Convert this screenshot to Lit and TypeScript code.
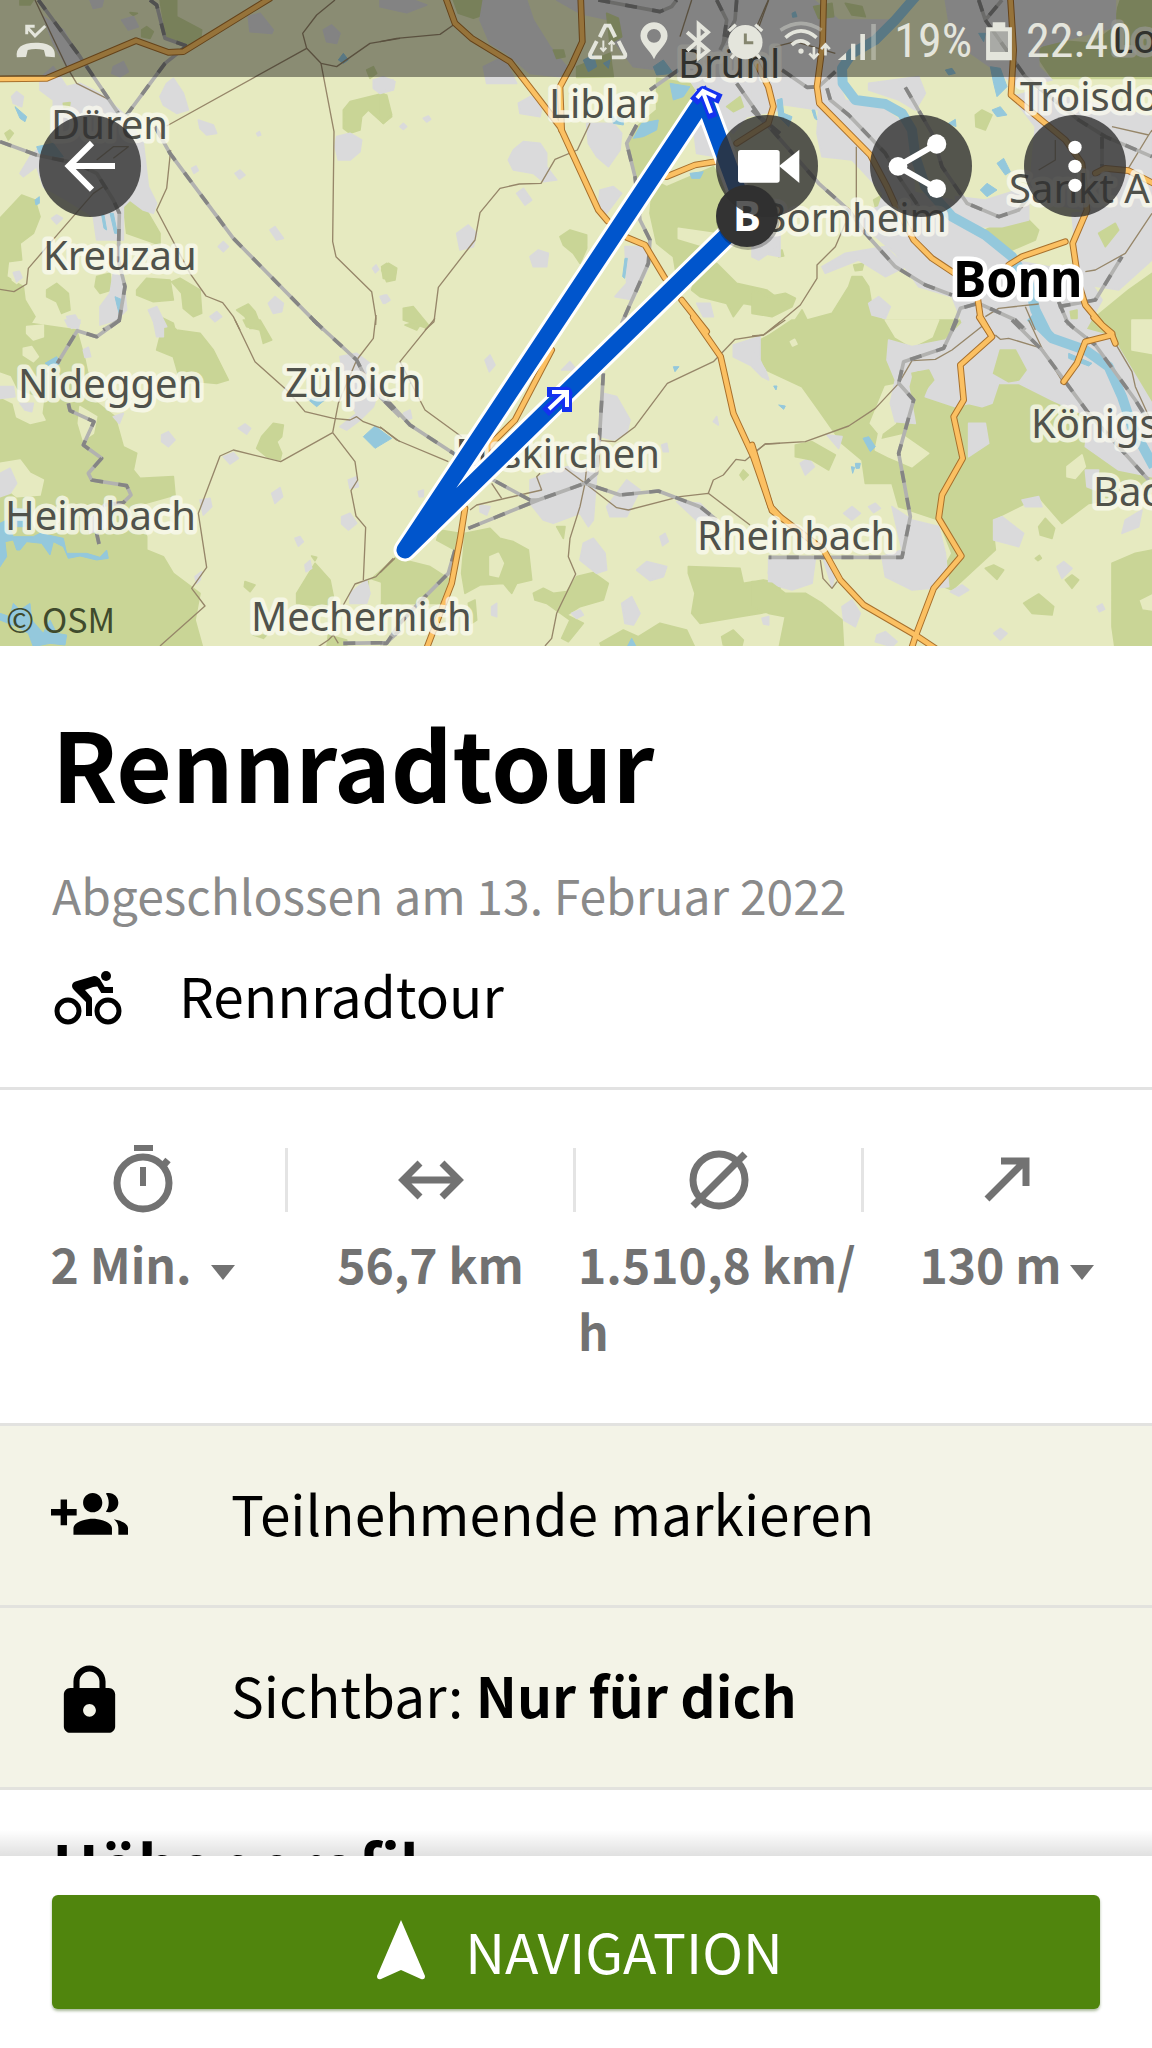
import { LitElement, html, svg, css } from "lit";
import { customElement } from "lit/decorators.js";

interface Tile {
  x: number;
  y: number;
  forest: string[];
  clearing: string[];
  town: string[];
  grove: string[];
  water: string[];
  river: string[];
  minor: string[];
  rail: string[];
  road: string[];
}

/* Vector tiles: x / y is the tile origin on the map, geometry is in thirds of a map unit. */
const TILES: Tile[] = [
  {
    x: 0, y: 0,
    forest: [
      "0,655 65,585 105,600 120,650 100,700 60,730 65,780 25,785 20,830 70,860 75,900 105,950 80,990 0,990",
      "370,610 410,595 445,640 480,700 480,735 380,700",
      "290,830 330,820 335,870 300,880 285,860",
      "140,870 170,850 205,880 210,930 185,940 170,905 140,890",
      "410,870 440,835 510,840 520,900 460,905 410,885",
      "515,845 540,835 600,870 605,940 580,950 550,925 545,880",
      "710,930 745,912 765,935 785,985 750,985 735,950",
      "1030,330 1050,305 1150,280 1175,350 1150,370 1105,330 1085,350 1080,390 1050,400 1030,385",
      "1145,810 1165,790 1190,805 1185,840 1160,845",
      "480,0 530,0 530,50 605,90 600,130 560,135 500,115 490,60",
      "425,90 440,80 460,95 450,115 425,110",
      "1100,210 1120,200 1130,220 1110,235",
      "15,400 30,390 40,400 25,420",
      "480,950 520,970 525,990 490,990",
      "60,0 100,0 90,15 60,15",
      "390,38 412,40 400,46",
    ],
    clearing: ["35,815 60,810 70,835 50,850 37,840"],
    town: [
      "120,235 160,200 200,260 240,250 300,280 370,340 430,430 445,560 470,610 460,640 430,630 390,600 370,620 370,720 290,720 280,650 200,600 130,560 110,500 70,530 60,520 90,470 110,450 160,430 160,300 120,270",
      "130,50 190,90 240,180 200,200 160,130",
      "35,290 50,275 70,290 65,320 40,310",
      "480,290 500,250 520,235 550,280 565,330 530,340 490,315",
      "595,360 640,375 650,400 620,405 600,385",
      "705,520 720,510 735,525 718,537",
      "1010,410 1050,400 1085,420 1080,455 1050,480 1015,480 1005,440",
      "1120,240 1150,230 1185,245 1180,270 1140,280 1120,265",
      "745,50 780,40 820,90 815,100 750,95",
      "970,90 995,75 1020,100 1010,130 980,125",
      "365,60 400,50 415,80 385,90",
      "340,200 370,185 385,215 360,230 335,220",
      "270,0 310,0 305,20 280,25",
      "810,690 825,680 850,715 830,720",
      "655,740 670,725 685,740 670,755",
      "805,910 825,890 850,910 845,935 820,940",
      "445,930 470,920 500,980 470,985",
      "300,920 330,880 340,820 365,830 375,880 380,930 350,960 300,975",
      "630,950 650,935 665,950 645,965",
      "40,818 58,814 66,833 50,845",
      "155,655 170,645 187,655 170,672",
      "575,505 588,498 595,512 582,520",
      "770,400 778,395 782,405 774,408",
      "1118,805 1128,795 1136,808 1126,818",
      "1145,895 1160,885 1170,900 1155,910",
      "200,950 225,945 240,970 215,985",
    ],
    grove: ["190,310 210,308 208,320 192,322"],
    water: [
      "45,320 80,350 75,365 60,355",
      "110,440 160,430 190,470 160,475 120,465",
      "105,600 118,590 118,610 108,615",
      "1015,180 1030,160 1045,180 1030,190",
      "345,890 368,900 360,950 352,920",
      "305,645 312,645 320,690 312,685",
      "330,640 340,640 352,700 344,700",
    ],
    river: [],
    minor: [
      "105,0 200,200 230,250 320,295",
      "1005,0 950,45 908,100 920,145 500,378",
      "920,145 963,190 1010,200 1110,130 1200,115",
      "963,190 1002,395 998,725 1008,770 1115,875 1128,955 1127,975",
      "512,450 500,565 470,630 570,820 618,888 668,908 700,950 720,990",
      "310,560 280,580 180,695 85,805 80,852 42,875 0,868",
      "290,480 340,440 385,440 340,475",
    ],
    rail: [
      "115,0 240,170 355,340",
      "450,0 470,15 495,115 560,138",
      "560,138 495,190 380,345",
      "0,425 110,465 230,490 290,520 340,600 358,640 355,780 375,860 358,960 310,990",
      "465,380 510,460 700,715 970,990",
    ],
    road: ["-10,237 140,235 408,122 505,157 550,155 810,-5"],
  },
  {
    x: 380, y: 0,
    forest: [
      "220,0 310,0 325,40 280,55 235,40",
      "370,30 395,25 398,45 375,52",
      "0,280 20,285 35,345 10,370 0,360",
      "540,710 570,690 620,705 620,745 600,790 580,760 550,735",
      "5,800 20,790 48,815 40,840 10,835",
      "70,925 100,920 145,975 140,985 70,960",
      "830,235 930,250 960,290 800,540 765,530 760,480 740,440 770,380 830,330",
      "820,540 860,560 1000,500 1060,600 1050,700 1020,720 890,830 880,770 830,730 810,640",
      "940,850 1010,790 1070,850 1160,870 1200,900 1200,930 1090,910 1060,950 1040,910 960,890 935,870",
    ],
    clearing: ["895,685 1000,700 1010,725 960,735 895,715"],
    town: [
      "400,450 430,425 480,430 500,460 500,500 530,540 490,545 460,520 400,510 385,480",
      "410,580 430,565 455,600 435,615",
      "620,370 700,370 725,400 720,450 685,500 650,470 625,430",
      "660,570 700,560 725,580 680,640 655,620",
      "230,700 265,675 290,700 280,740 240,750",
      "450,770 475,750 505,760 500,800 460,800",
      "0,0 100,0 140,15 80,38 0,20",
      "310,0 440,0 460,60 510,140 560,200 540,230 450,220 380,160 330,130 300,60",
      "530,0 1200,0 1200,330 1100,350 1060,400 1000,350 930,240 880,215 760,200 700,120 690,60 600,40",
      "735,740 800,740 810,790 760,900 705,890 740,850",
      "950,910 990,910 1000,950 970,950",
      "1120,720 1200,700 1200,770 1150,760",
      "940,380 970,350 1010,470 950,460",
      "415,310 450,290 490,300 480,350 420,340",
      "0,235 40,240 40,265 0,275",
      "310,200 370,170 410,250 320,250",
      "60,380 70,370 80,380 70,388",
      "130,355 145,348 152,358 140,366",
      "0,890 15,885 25,900 10,910",
    ],
    grove: [
      "520,150 550,150 555,170 530,175",
      "590,200 690,160 700,230 590,232",
      "680,40 715,55 725,110 690,130",
      "1040,320 1080,290 1090,320 1060,335",
    ],
    water: [
      "870,250 930,260 910,290 880,300",
      "820,200 850,180 880,220 830,225",
      "785,370 835,360 830,390 790,410 760,415",
      "930,520 970,515 960,535 935,535",
      "610,180 640,165 650,200 625,215",
      "670,190 690,180 685,205",
      "735,775 742,775 734,835 728,830",
      "695,350 730,350 730,375 700,370",
    ],
    river: [],
    minor: [
      "0,125 50,115 180,103 220,75",
      "630,370 592,450 525,478 483,550 418,552 360,565 300,638 285,720 175,862 162,965 135,990",
      "935,0 900,110",
      "1165,0 1130,80",
    ],
    rail: [
      "655,0 840,35 875,20 890,0",
      "1010,0 1040,60 1030,130",
      "1070,0 1065,60 1020,150",
      "895,210 810,270",
      "770,375 740,430 765,530 780,660 810,720 805,790 725,970",
      "1070,250 1140,350 1200,400",
    ],
    road: [
      "196,-10 225,70 275,115 390,185 475,295 540,380 655,630 683,663",
      "602,-10 607,125 575,195 540,260 545,390",
      "1130,190 1165,260 1180,320 1165,370 1070,430",
      "860,530 945,495 1005,485",
      "740,712 795,735 855,835",
      "905,900 980,995",
    ],
  },
  {
    x: 752, y: 0,
    forest: [
      "1100,0 1200,0 1200,235 900,235 850,160 900,120 1020,130 1090,80",
      "670,345 690,330 720,345 700,390 672,380",
      "365,600 400,580 410,620 370,620",
      "0,870 50,890 100,880 130,895 120,920 60,950 0,940",
      "130,960 150,930 165,960 240,940 290,860 300,830 330,830 350,860 360,920 400,970 410,990 100,990",
      "305,795 335,790 330,810 310,812",
      "75,755 90,750 95,768 80,770",
      "700,690 760,660 820,650 860,690 850,720 780,750 740,720",
      "1200,820 1130,870 1020,960 1080,990 1200,990",
    ],
    clearing: ["1080,0 1100,0 1090,30"],
    town: [
      "0,0 185,0 260,60 420,60 360,110 280,170 255,240 280,300 400,330 470,380 490,600 450,640 300,480 210,470 195,400 200,330 0,300",
      "350,250 500,230 520,280 490,330 440,300 350,270",
      "400,560 600,600 780,780 1000,820 1050,900 1000,990 640,990 600,890 500,860 430,760 300,650 380,620",
      "610,590 700,600 830,560 830,660 750,680 680,680 620,640",
      "580,0 1090,0 1090,80 980,110 860,140 860,200 900,240 800,260 600,120",
      "780,290 850,270 1200,350 1200,600 1100,650 1000,630 830,600 850,380",
      "960,640 1200,620 1200,780 1100,870 980,850",
      "210,800 280,760 400,740 460,800 400,830 320,780 220,820",
      "350,910 380,890 415,920 400,955 360,945",
      "0,720 70,700 80,740 20,780 0,770",
    ],
    grove: [
      "185,20 240,10 245,50 200,55",
      "280,10 330,20 340,50 300,45",
      "955,935 975,930 975,955 958,955",
      "1040,700 1090,670 1100,690 1060,740",
    ],
    water: [
      "715,200 745,205 765,260 735,290 725,250",
      "720,330 745,320 765,345 735,350",
      "735,490 755,475 775,515 760,525",
      "685,570 705,550 735,570 705,590",
      "590,370 610,358 612,380",
      "580,210 600,205 610,220 590,225",
      "680,100 700,100 695,125",
      "120,40 130,35 135,50 122,52",
      "75,300 90,295 95,340 120,350 110,380 80,350",
      "180,330 188,330 195,360 188,355",
    ],
    river: ["495,-15 430,60 370,120 300,160 270,205 272,250 310,300 400,312 450,340 480,390 490,470 520,560 600,650 700,705 780,770 830,850 850,930 885,1000"],
    minor: [
      "50,0 10,110",
      "313,440 313,620",
      "280,670 250,740 195,795 195,835 145,915 55,990",
      "1080,380 1190,405 1120,520",
      "910,420 910,480 860,510",
      "1200,640 1120,760 1030,810 1000,815",
      "700,950 740,925 860,912",
      "70,140 130,125 250,160",
      "820,920 850,990",
      "1200,390 1190,405",
    ],
    rail: [
      "680,0 700,60 750,0",
      "700,60 820,230 980,360 1060,410 1200,470",
      "90,210 165,262 200,260 250,215",
      "225,265 235,300 290,345 400,460 440,530 500,620",
      "460,262 540,400 570,500 645,610 740,650 800,630 830,590",
      "0,330 60,390 200,550 290,630 340,700 430,800 520,855 600,885",
      "600,990 625,925 680,910 790,960 820,990",
      "920,905 950,975",
      "920,920 1030,900 1110,770",
      "1050,410 1050,500",
    ],
    road: [
      "215,-10 212,130 195,260 202,310 355,465 405,560 430,615 485,720 540,775 630,835",
      "775,-10 785,150 777,285 940,420 990,490 1005,630 962,730 980,850 1000,915 1050,975 1080,1000",
      "1030,520 1060,505 1130,512 1210,553",
      "770,795 810,770 940,725",
      "675,880 685,950 714,1000",
    ],
  },
  {
    x: 0, y: 320,
    forest: [
      "90,10 230,30 255,120 280,240 345,290 370,380 410,400 400,450 420,475 520,470 525,525 400,560 440,650 440,690 490,710 520,760 600,820 585,900 610,990 0,990 0,-10 80,-10",
      "490,0 530,30 600,40 640,90 685,180 650,190 540,180 520,110 470,90 480,50",
      "730,0 780,0 815,60 790,70 780,30 740,20",
      "785,350 820,310 850,315 845,350 830,365 845,400 840,420 800,410 770,385",
      "735,785 765,795 750,815 733,800",
      "890,820 945,730 990,780 1000,830 980,860 890,850",
      "1100,790 1200,700 1200,850 1140,850",
      "980,990 985,945 1040,960 1040,990",
      "760,945 800,945 790,955",
      "935,708 950,712 945,722",
    ],
    clearing: [
      "80,20 130,15 130,50 100,60 80,40",
      "70,85 95,80 115,110 100,125 70,105",
      "0,160 30,170 50,210 130,240 125,280 135,300 90,310 50,290 40,250 0,230",
      "240,260 290,290 280,340 250,360 235,310",
      "0,430 60,420 90,460 130,480 120,525 50,530 0,490",
      "1110,780 1140,790 1140,850 1110,850",
    ],
    town: [
      "0,200 40,200 45,230 0,235",
      "60,250 100,250 95,275 75,270",
      "340,290 370,280 358,310",
      "485,345 505,335 525,360 505,380 485,365",
      "715,325 735,312 752,325 740,342",
      "250,90 265,82 272,110 255,112",
      "670,410 700,398 715,415 690,432",
      "815,520 840,503 848,530 825,550",
      "1025,590 1050,580 1070,610 1045,630 1025,612",
      "600,540 630,535 635,560 610,585",
      "0,460 30,445 50,490 30,520 0,530",
      "1050,820 1100,780 1110,820 1100,850 1050,850",
      "1020,110 1070,100 1110,130 1090,180 1140,200 1120,260 1080,300 1040,330 1020,320 1070,280 1040,240",
      "885,655 900,650 910,665 895,678",
      "915,735 930,722 935,745 918,755",
      "1045,480 1070,470 1075,500 1050,505",
      "460,0 490,10 490,50 470,50",
      "195,0 240,0 235,25 205,20",
      "265,600 315,550 320,620 270,640",
      "585,770 605,755 600,780 590,790",
    ],
    grove: [],
    water: [
      "135,130 170,110 180,130 160,145",
      "1090,350 1125,318 1175,355 1125,385",
      "920,235 980,235 950,260",
      "0,610 20,600 40,650 100,650 120,640 190,655 200,700 260,700 300,712 320,690 325,715 290,720 240,708 205,715 190,680 160,665 150,705 125,670 80,665 60,690 50,690 40,660 15,665 20,710 0,740",
      "40,850 60,870 90,850 95,900 130,940 150,900 170,940 200,945 195,975 150,970 100,980 85,940 50,920 0,900 0,880 30,890",
      "40,565 90,570 80,620 50,620",
    ],
    river: [],
    minor: [
      "705,0 765,125 860,210 915,275 1000,295 1050,300 1070,290 1090,305 1145,325 1200,365",
      "1128,-15 1120,55 1070,120 1015,250 998,338",
      "998,338 842,425 700,390 660,408 595,580 620,742 575,805 615,858 480,978",
      "998,338 1065,425 1073,480 1053,512 1068,588 1097,622 1090,780",
      "1180,715 1128,770 1065,792 1030,855",
      "955,980 985,960 1000,945 1015,970",
    ],
    rail: [
      "360,0 290,50 232,32 172,130",
      "205,250 210,272 282,305 250,375 305,415 265,460 275,480 380,497 393,525 370,548 315,555",
      "290,640 297,672",
      "940,0 1070,120 1110,200 1200,290",
      "1030,970 1160,968 1200,930",
    ],
    road: [],
  },
  {
    x: 380, y: 320,
    forest: [
      "255,640 330,625 360,655 400,665 445,690 455,780 410,790 395,820 370,790 300,795 255,820 245,760",
      "0,760 40,720 90,725 150,740 205,775 190,850 10,850",
      "180,630 240,640 225,690 170,660",
      "530,620 555,620 550,655",
      "460,820 490,805 520,820 560,815 590,770 640,758 685,790 670,840 600,860 560,885 610,910 565,965 545,955 570,900 500,850 465,840",
      "660,970 730,930 775,950 840,910 920,930 948,990 670,990",
      "925,740 1080,745 1090,790 1150,780 1200,790 1200,870 1140,880 1080,890 960,910 935,880 945,820 925,760",
      "1025,950 1060,930 1090,960 1085,980 1030,975",
      "1140,60 1200,30 1200,160 1150,130",
      "75,15 130,0 110,30",
      "1080,465 1090,450 1105,465 1090,480",
      "265,850 285,840 290,900 275,910",
    ],
    clearing: ["330,710 355,700 370,730 355,770 330,765"],
    town: [
      "450,480 560,440 650,460 640,600 625,620 600,580 520,610 490,600 450,550",
      "660,280 670,220 710,230 750,300 740,340 700,360 665,350",
      "610,670 640,655 675,700 680,750 650,760 600,720",
      "770,750 800,725 860,740 850,770 810,782",
      "725,850 755,830 780,880 760,915 735,910",
      "1060,75 1140,50 1140,120 1165,175 1120,140 1060,110",
      "680,560 740,480 780,510 740,590 690,590",
      "315,120 330,105 345,135 328,155",
      "840,650 855,640 865,665 848,677",
      "890,545 960,550 1010,600 960,610",
      "1170,715 1200,715 1200,790 1165,760",
      "545,150 570,125 590,150",
      "300,555 330,560 320,585 300,575",
      "575,880 600,870 610,885 590,895",
      "335,860 350,850 350,890 335,885",
      "845,375 860,370 865,395 850,395",
      "1000,305 1010,290 1015,315",
      "115,515 130,510 130,530 118,530",
      "70,280 90,270 95,295 80,300",
    ],
    grove: [],
    water: ["880,140 897,140 885,155", "755,955 767,977 743,978"],
    river: [],
    minor: [
      "165,-5 60,125 135,270 245,350",
      "0,320 50,360 205,425",
      "1200,5 1150,45 1065,58 1000,125 862,190 765,320 705,365 660,362",
      "335,490 365,535",
      "270,570 290,555 485,510 470,470 480,460",
      "555,445 615,490 620,440",
      "615,490 600,560 570,655 565,710 587,762 530,880 515,955 495,978",
      "615,490 710,563 745,570 900,530 985,520 1110,615",
      "985,520 1000,480 1030,465 1068,418 1095,422 1155,372 1200,370",
      "0,758 45,715",
    ],
    rail: [
      "20,240 90,315 220,400 340,480 450,540 475,540",
      "265,625 475,540 615,490 720,525 835,513 960,560 1010,600",
      "670,160 658,360 650,460 615,490",
      "225,690 205,760 130,835 60,910 20,970 0,970",
    ],
    road: [
      "515,90 405,300 340,365 310,405",
      "255,565 240,660 215,790 136,995",
      "940,-8 1022,110 1060,280 1120,410 1172,560 1200,590",
    ],
  },
  {
    x: 752, y: 320,
    forest: [
      "30,60 120,0 1200,0 1200,520 1010,550 930,610 860,530 720,600 730,690 600,810 550,790 600,700 560,600 440,560 420,490 340,490 330,420 270,370 200,270 150,200 20,140",
    ],
    clearing: [
      "400,0 560,0 540,50 480,80 430,50",
      "355,310 400,200 450,190 440,260 430,310 390,340 385,360 450,345 530,400 480,440 410,410 370,390 380,340",
      "945,440 990,405 1000,440 970,475 945,470",
      "1140,0 1200,0 1200,100 1140,90",
      "115,65 128,58 135,72 122,78",
    ],
    town: [
      "410,60 480,80 580,60 640,0 720,0 900,0 1080,50 1200,250 1200,470 1100,450 1000,380 1010,290 900,240 800,190 740,190 720,250 690,260 650,250 610,260 520,230 545,170 500,150 480,160 470,200 490,310 430,305 415,250 430,180 405,120",
      "650,310 700,310 710,370 650,410",
      "420,560 480,600 560,620 580,700 590,800 480,810 400,770 390,710 450,690",
      "725,600 750,590 815,640 800,680 725,660",
      "810,540 860,530 870,560 820,560",
      "50,715 190,715 180,790 120,810 50,790",
      "275,580 300,560 325,580 300,600",
      "350,560 370,550 385,565 365,578",
      "915,740 935,725 960,745 930,775",
      "595,815 630,795 650,810 620,828",
      "270,860 300,840 325,880 310,920 275,900",
      "375,945 400,935 435,965 420,980 370,965",
      "725,940 745,925 765,940 745,960",
      "145,430 170,415 187,440 160,465",
      "225,345 270,350 260,385",
      "1110,640 1120,600 1170,570 1160,620",
      "30,895 50,890 50,915 35,912",
      "1035,860 1050,852 1058,868 1042,875",
      "0,90 40,150 50,180 30,170 0,140",
      "215,720 250,760 240,800",
      "1000,450 1040,450 1030,510 1005,500",
    ],
    grove: [
      "725,160 745,90 790,90 822,150 800,180 770,185",
      "860,620 880,595 908,625 900,655 865,645",
      "815,850 860,822 905,860 900,885 840,880",
      "700,745 725,735 755,750 735,778",
      "940,780 960,765 980,780 960,805",
      "850,715 862,706 868,715 858,722",
      "1080,730 1150,700 1200,690 1200,820 1160,840 1170,870 1200,875 1200,990 1090,990 1080,920",
      "0,785 60,790 100,820 160,820 210,850 270,900 275,990 80,990 100,890 50,880 0,860",
      "130,375 180,365 250,405 230,450 180,420 130,410",
      "480,160 530,150 545,180 520,210 495,230",
    ],
    water: [
      "333,355 350,350 370,380 355,395",
      "80,255 100,258 95,268",
      "65,198 75,198 72,210",
      "310,430 325,430 322,445 312,445",
      "298,440 308,442 302,460",
      "950,100 1020,130 1010,138 950,115",
    ],
    river: ["835,-10 900,55 1000,90 1070,140 1110,230 1140,320 1205,440"],
    minor: [
      "100,0 35,45 0,48",
      "695,15 600,90 550,118 480,122 440,190 370,265 290,318 160,365 40,372 10,395",
      "730,45 745,58 770,55 870,85",
      "830,0 870,85 935,190",
      "205,720 213,775 240,805 255,785",
      "1090,70 1140,155 1150,200 1200,310",
    ],
    rail: [
      "615,0 575,85 455,125 440,190 485,240 440,400 475,590 450,712 50,712",
      "780,0 870,90 1010,280 1190,480",
      "940,0 960,20 1030,75 1150,240 1200,320",
    ],
    road: [
      "682,-8 720,50 625,135 635,240 605,290 632,415 570,525 560,595 628,708 545,805 490,950 474,1000",
      "0,375 60,572 215,690 265,780 335,855 490,945 565,995",
      "1025,-8 1080,45 1000,65 975,130 935,185",
      "1080,45 1090,70",
    ],
  },
];

const LABELS: { x: number; y: number; name: string; end?: boolean }[] = [
  { x: 51, y: 139, name: "Düren" },
  { x: 43, y: 270, name: "Kreuzau" },
  { x: 549, y: 118, name: "Liblar" },
  { x: 678, y: 78, name: "Brühl" },
  { x: 947, y: 232, name: "Bornheim", end: true },
  { x: 1020, y: 111, name: "Troisdo" },
  { x: 1009, y: 203, name: "Sankt A" },
  { x: 1112, y: 53, name: "Lo" },
  { x: 285, y: 397, name: "Zülpich" },
  { x: 18, y: 398, name: "Nideggen" },
  { x: 5, y: 530, name: "Heimbach" },
  { x: 251, y: 631, name: "Mechernich" },
  { x: 660, y: 468, name: "Euskirchen", end: true },
  { x: 697, y: 550, name: "Rheinbach" },
  { x: 1031, y: 438, name: "Königs" },
  { x: 1093, y: 506, name: "Bad" },
];

type AreaKind = "forest" | "clearing" | "town" | "grove" | "water";
type LineKind = "river" | "minor" | "rail" | "road";

const place = (t: Tile) => `translate(${t.x} ${t.y}) scale(0.33333)`;

const areas = (kind: AreaKind) =>
  TILES.map(
    (t) => svg`<g class=${"area " + kind} transform=${place(t)}>
      ${t[kind].map((p) => svg`<polygon points=${p}></polygon>`)}
    </g>`,
  );

const lines = (kind: LineKind, cls: string) =>
  TILES.map(
    (t) => svg`<g class=${"line " + cls} transform=${place(t)}>
      ${t[kind].map((p) => svg`<polyline points=${p}></polyline>`)}
    </g>`,
  );

@customElement("tour-map")
export class TourMap extends LitElement {
  static styles = css`
    :host { display: block; }
    .map { display: block; width: 100%; height: auto; background: #e6eac0; }
    .area { stroke-width: 5; stroke-linejoin: round; }
    .forest, .grove { fill: #c9d596; stroke: #c9d596; }
    .clearing { fill: #e6eac0; stroke: #e6eac0; }
    .town { fill: #dadadb; stroke: #dadadb; }
    .water { fill: #94c8dc; stroke: #94c8dc; stroke-width: 3; }
    .line { fill: none; stroke-linejoin: round; }
    .river { stroke: #94c8dc; stroke-width: 30; }
    .minor { stroke: #968669; stroke-width: 4; }
    .rail { stroke: #b2b2b0; stroke-width: 11; }
    .sleepers { stroke: #858584; stroke-width: 11; stroke-dasharray: 36 46; }
    .casing { stroke: #a8702c; stroke-width: 20; stroke-linecap: round; }
    .road { stroke: #fbc062; stroke-width: 14; stroke-linecap: round; }
    .label {
      font: 40px "Noto Sans", sans-serif;
      fill: #50524b;
      stroke: rgba(250, 250, 240, 0.75);
      stroke-width: 9px;
      stroke-linejoin: round;
      paint-order: stroke;
    }
    .end { text-anchor: end; }
    .city { font-size: 50px; font-weight: 700; fill: #000; stroke: #fff; }
    .route { fill: none; stroke-linejoin: round; stroke-linecap: round; }
    .halo { stroke: #fff; stroke-width: 23; }
    .track { stroke: #0055cc; stroke-width: 17; }
    .heading { fill: none; stroke: #fff; stroke-width: 4; }
    .glow { stroke: #1432f0; stroke-width: 10; stroke-linejoin: round; stroke-linecap: square; }
    .pin { fill: #333; }
    .shade { fill: rgba(0, 0, 0, 0.25); }
    .letter { font: 700 42px "Noto Sans", sans-serif; fill: #fff; text-anchor: middle; }
    .credit { font: 34px "Noto Sans CJK SC", sans-serif; fill: #3f4a2c; }
  `;

  render() {
    return html`<svg class="map" viewBox="0 0 1152 646" role="img" aria-label="Karte">
      ${areas("forest")} ${areas("clearing")} ${areas("town")} ${areas("grove")}
      ${areas("water")} ${lines("river", "river")} ${lines("minor", "minor")}
      ${lines("rail", "rail")} ${lines("rail", "sleepers")}
      ${lines("road", "casing")} ${lines("road", "road")}
      ${LABELS.map(
        (l) => svg`<text class=${l.end ? "label end" : "label"} x=${l.x} y=${l.y}>${l.name}</text>`,
      )}
      <text class="label city" x="953" y="297">Bonn</text>
      <polyline class="route halo" points="747,216 704,99 405,550 747,216"></polyline>
      <polyline class="route track" points="747,216 704,99 405,550 747,216"></polyline>
      <path class="heading glow" d="M549 409 L566 393 M552 392 H567 V407"></path>
      <path class="heading" d="M549 409 L566 393 M552 392 H567 V407"></path>
      <path class="heading glow" d="M711 113 L703 92 M697 98 L703 91 L716 97"></path>
      <path class="heading" d="M711 113 L703 92 M697 98 L703 91 L716 97"></path>
      <circle class="shade" cx="748" cy="218" r="32"></circle>
      <circle class="pin" cx="747" cy="216" r="31"></circle>
      <text class="letter" x="747" y="231">B</text>
      <text class="credit" x="6" y="633">© OSM</text>
    </svg>`;
  }
}

@customElement("status-bar")
export class StatusBar extends LitElement {
  static styles = css`
    :host { display: block; }
    .bar {
      display: flex;
      align-items: center;
      gap: 14px;
      height: 77px;
      padding: 4px 20px 0 16px;
      box-sizing: border-box;
      background: rgba(0, 0, 0, 0.4);
      color: #e4e5dc;
      font: 48px "Roboto Condensed", Roboto, sans-serif;
    }
    .space { flex: 1; }
    svg { display: block; height: 43px; overflow: visible; fill: none; stroke: currentColor; }
    .solid { fill: currentColor; stroke: none; }
    .faint { opacity: 0.4; }
    .cut { stroke: #85866f; }
  `;

  render() {
    return html`<div class="bar">
      <svg viewBox="46 50 120 130" width="40" stroke-width="9">
        <path class="solid" d="M48 166C44 138 62 122 105 122C150 122 166 138 163 166L135 163L130 144Q105 137 81 144L76 165Z"></path>
        <path d="M134 71L103 101L80 76M78 96V72H102"></path>
      </svg>
      <span class="space"></span>
      <svg viewBox="636 50 120 130" width="40" stroke-width="12">
        <path d="M677 105L694 70H707L724 105M668 117L648 156Q646 166 655 166H684M734 117L754 156Q756 166 747 166H714"></path>
        <path stroke-width="6" d="M688 115V146M679 137L688 147L697 137M713 148V118M704 127L713 117L722 127"></path>
      </svg>
      <svg viewBox="798 50 87 130" width="29">
        <path class="solid" fill-rule="evenodd" d="M840 172C828 143 799 128 799 101A41 41 0 0 1 881 101C881 128 852 143 840 172ZM840 80A21 21 0 1 0 840 122A21 21 0 1 0 840 80Z"></path>
      </svg>
      <svg viewBox="927 50 90 130" width="30" stroke-width="12">
        <path d="M939 90L1002 145L974 168V66L1002 90L939 146"></path>
      </svg>
      <svg viewBox="1059 50 117 130" width="39" stroke-width="10">
        <circle class="solid" cx="1114" cy="120" r="52"></circle>
        <path d="M1064 86L1085 67M1144 67L1165 86M1080 158L1071 169M1149 158L1159 169"></path>
        <path class="cut" stroke-width="9" d="M1114 94V122H1138"></path>
      </svg>
      <svg viewBox="102 50 129 130" width="43" stroke-width="11">
        <path class="faint" d="M103 84Q165 42 227 84"></path>
        <path d="M118 106Q165 66 212 106M137 128Q165 104 190 128"></path>
        <circle class="solid" cx="165" cy="147" r="8"></circle>
        <path stroke-width="8" d="M204 135V166M190 154L204 168L218 154M239 160V128M226 141L239 127L252 141"></path>
      </svg>
      <svg viewBox="273 50 129 130" width="43">
        <path class="solid" d="M275 174L300 152V174ZM315 174V125H328V174ZM343 174V95H357V174Z"></path>
        <path class="solid faint" d="M376 174V65H390V174Z"></path>
      </svg>
      <span>19%</span>
      <svg viewBox="705 50 78 130" width="26">
        <path class="solid" fill-rule="evenodd" d="M705 75H725V60H763V75H783V175H705ZM717 88V150H771V88Z"></path>
        <path class="solid faint" d="M717 88H771V150H717Z"></path>
      </svg>
      <span>22:40</span>
    </div>`;
  }
}

@customElement("app-root")
export class AppRoot extends LitElement {
  static styles = css`
    :host {
      display: flex;
      flex-direction: column;
      height: 100vh;
      background: #fff;
      color: #000;
      font-family: "Noto Sans CJK SC", "Noto Sans CJK JP", "Noto Sans", sans-serif;
    }
    h1, h2, p { margin: 0; }
    button { font: inherit; color: inherit; border: 0; padding: 0; background: none; cursor: pointer; }
    svg { display: block; flex: none; }
    .content { flex: 1; min-height: 0; overflow: auto; scrollbar-width: none; }
    .hero { position: relative; }
    .overlay { position: absolute; top: 0; left: 0; right: 0; }
    .tools { display: flex; gap: 52px; padding: 38px 26px 0 39px; }
    .push { margin-right: auto; }
    .round { border-radius: 50%; background: rgba(48, 48, 48, 0.8); }
    .glyph { fill: #fff; stroke: #fff; stroke-width: 0; }
    .stroke { fill: none; stroke: #fff; stroke-width: 18; }
    .head { padding: 56px 52px 57px; border-bottom: 3px solid #e2e2e2; }
    .title { font-size: 96px; line-height: 120px; font-weight: 700; }
    .date { margin-top: 40px; font-size: 48px; line-height: 64px; color: #8a8a8a; }
    .sport { display: flex; align-items: center; gap: 55px; margin-top: 32px; font-size: 55px; line-height: 72px; }
    .stats {
      display: grid;
      grid-template-columns: repeat(4, 1fr);
      padding: 58px 0 59px;
      border-bottom: 3px solid #e2e2e0;
      color: #727272;
    }
    .stat { display: flex; flex-direction: column; align-items: center; gap: 18px; padding-right: 3px; }
    .top { align-self: stretch; display: flex; justify-content: center; margin-right: -3px; border-right: 3px solid #e4e4e4; }
    .stat:last-child .top { border-right-color: transparent; }
    .measure { fill: none; stroke: #727272; stroke-width: 7; overflow: visible; }
    .bar { fill: #727272; stroke: none; }
    .value { display: flex; align-items: center; gap: 8px; font-size: 48px; line-height: 67px; font-weight: 700; text-align: left; white-space: pre-wrap; }
    .figure { padding-left: 2px; }
    .caret { margin-top: 18px; fill: #727272; }
    .row {
      display: flex;
      align-items: center;
      gap: 103px;
      width: 100%;
      height: 182px;
      padding: 0 51px;
      border-bottom: 3px solid #e2e2de;
      background: #f3f3e7;
      font-size: 55px;
      line-height: 72px;
      text-align: left;
    }
    .text { padding-bottom: 8px; }
    .profile { padding: 34px 52px; font-size: 62px; line-height: 80px; }
    .footer { position: relative; padding: 39px 52px; background: #fff; }
    .footer::before {
      content: "";
      position: absolute;
      left: 0;
      right: 0;
      bottom: 100%;
      height: 26px;
      background: linear-gradient(rgba(0, 0, 0, 0), rgba(0, 0, 0, 0.12));
    }
    .go {
      display: flex;
      align-items: center;
      justify-content: center;
      gap: 40px;
      width: 100%;
      height: 114px;
      padding: 0 0 4px 8px;
      border-radius: 6px;
      background: #50850d;
      box-shadow: 0 2px 3px rgba(40, 80, 0, 0.4);
      color: #fff;
      font-size: 55px;
      line-height: 72px;
    }
  `;

  render() {
    const caret = html`<svg class="caret" width="24" height="15" viewBox="0 0 24 15"><path d="M0 0H24L12 15Z"></path></svg>`;
    return html`
      <main class="content">
        <header class="hero">
          <tour-map></tour-map>
          <div class="overlay">
            <status-bar></status-bar>
            <nav class="tools">
              <button class="round push" aria-label="Zurück">
                <svg class="stroke" width="102" height="102" viewBox="117 345 306 306">
                  <path d="M345 498H206M276 429L206 498L276 569"></path>
                </svg>
              </button>
              <button class="round" aria-label="Video">
                <svg class="glyph" width="102" height="102" viewBox="1011 345 306 306">
                  <rect x="1077" y="450" width="125" height="98" rx="8"></rect>
                  <path d="M1200 498L1261 449V549Z"></path>
                </svg>
              </button>
              <button class="round" aria-label="Teilen">
                <svg class="glyph" width="102" height="102" viewBox="357 345 306 306">
                  <path class="stroke" d="M557 432L440 499L557 566"></path>
                  <circle cx="441" cy="499" r="28"></circle>
                  <circle cx="557" cy="432" r="29"></circle>
                  <circle cx="557" cy="566" r="28"></circle>
                </svg>
              </button>
              <button class="round" aria-label="Mehr">
                <svg class="glyph" width="102" height="102" viewBox="817 345 306 306">
                  <circle cx="970" cy="442" r="20"></circle>
                  <circle cx="970" cy="499" r="20"></circle>
                  <circle cx="970" cy="556" r="20"></circle>
                </svg>
              </button>
            </nav>
          </div>
        </header>

        <section class="head">
          <h1 class="title">Rennradtour</h1>
          <p class="date">Abgeschlossen am 13. Februar 2022</p>
          <p class="sport">
            <svg width="72" height="64" viewBox="52 962 72 64">
              <g fill="none" stroke="#000" stroke-width="5">
                <circle cx="68" cy="1011" r="11"></circle>
                <circle cx="108" cy="1011" r="11"></circle>
                <path d="M97 980L103 990H113" stroke-width="6"></path>
                <path d="M78 988L89 1000V1016" stroke-width="6"></path>
              </g>
              <circle cx="106" cy="976" r="5"></circle>
              <path d="M72 986Q72 982 77 981L94 976Q98 976 100 980L101 986L93 987L85 990L92 998L87 1003L74 990Q72 988 72 986Z"></path>
            </svg>
            Rennradtour
          </p>
        </section>

        <section class="stats">
          <div class="stat">
            <div class="top">
              <svg class="measure" width="64" height="64" viewBox="0 0 64 64">
                <circle cx="32" cy="35" r="26"></circle>
                <rect class="bar" x="23" y="-3" width="19" height="6"></rect>
                <rect class="bar" x="29" y="19" width="6" height="19"></rect>
                <path d="M51 19L57 12"></path>
              </svg>
            </div>
            <button class="value">2 Min.&nbsp;${caret}</button>
          </div>
          <div class="stat">
            <div class="top">
              <svg class="measure" width="64" height="64" viewBox="0 0 64 64">
                <path d="M4 32H60M21 15L4 32L21 49M43 15L60 32L43 49"></path>
              </svg>
            </div>
            <div class="value">56,7 km</div>
          </div>
          <div class="stat">
            <div class="top">
              <svg class="measure" width="64" height="64" viewBox="0 0 64 64">
                <circle cx="32" cy="32" r="26"></circle>
                <path d="M6 58L58 6"></path>
              </svg>
            </div>
            <div class="value"><span class="figure">1.510,8 km/<wbr>h</span></div>
          </div>
          <div class="stat">
            <div class="top">
              <svg class="measure" width="64" height="64" viewBox="0 0 64 64">
                <path d="M12 51L50 13M26 13H51V38"></path>
              </svg>
            </div>
            <button class="value">130 m${caret}</button>
          </div>
        </section>

        <button class="row">
          <svg width="77" height="77" viewBox="0 0 24 24">
            <path d="M8 10H5V7H3v3H0v2h3v3h2v-3h3v-2zm10 1c1.66 0 2.99-1.34 2.99-3S19.66 5 18 5c-.32 0-.63.05-.91.14.57.81.9 1.79.9 2.86s-.34 2.04-.9 2.86c.28.09.59.14.91.14zm-5 0c1.66 0 2.99-1.34 2.99-3S14.66 5 13 5c-1.66 0-3 1.34-3 3s1.34 3 3 3zm6.62 2.16c.83.73 1.38 1.66 1.38 2.84v2h3v-2c0-1.54-2.37-2.49-4.38-2.84zM13 13c-2 0-6 1-6 3v2h12v-2c0-2-4-3-6-3z"></path>
          </svg>
          <span class="text">Teilnehmende markieren</span>
        </button>
        <button class="row">
          <svg width="77" height="77" viewBox="0 -1 24 24">
            <path d="M18 8h-1V6c0-2.76-2.24-5-5-5S7 3.240 7 6v2H6c-1.100 0-2 .9-2 2v10c0 1.100.9 2 2 2h12c1.100 0 2-.9 2-2V10c0-1.100-.9-2-2-2zm-6 9c-1.100 0-2-.9-2-2s.9-2 2-2 2 .9 2 2-.9 2-2 2zm3.100-9H8.900V6c0-1.710 1.390-3.100 3.100-3.100s3.100 1.390 3.100 3.100v2z"></path>
          </svg>
          <span class="text">Sichtbar: <b>Nur für dich</b></span>
        </button>

        <h2 class="profile">Höhenprofil</h2>
      </main>

      <footer class="footer">
        <button class="go">
          <svg width="48" height="60" viewBox="0 0 48 60" fill="#fff">
            <path d="M24 0L48 56Q48 60 44 59L24 50L4 59Q0 60 0 56Z"></path>
          </svg>
          NAVIGATION
        </button>
      </footer>
    `;
  }
}
